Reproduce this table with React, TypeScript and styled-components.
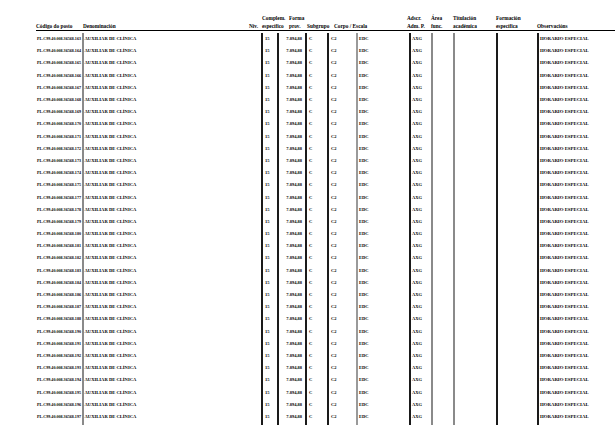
import React from 'react';
import styled, { createGlobalStyle } from 'styled-components';

const GlobalStyle = createGlobalStyle`
  html, body {
    margin: 0;
    padding: 0;
    background: #ffffff;
  }
  body {
    font-family: "Liberation Serif", "Times New Roman", serif;
    color: #000000;
  }
`;

const Page = styled.div`
  width: 615px;
  height: 439px;
  padding: 14px 0 0 36px;
  box-sizing: border-box;
  overflow: hidden;
`;

const headCols = '47px 166px 13px 27px 18px 27px 73px 24px 22px 43px 41px 63px';
const bodyCols = '46px 179px 16px 28px 22px 29px 53px 22px 22px 43px 41px 63px';

const HeaderRow = styled.div`
  display: grid;
  grid-template-columns: ${headCols};
  align-items: end;
  border-bottom: 1px solid #000000;
`;

const HeadCell = styled.div`
  font-size: 5.3px;
  font-weight: bold;
  line-height: 8px;
  height: 16px;
  display: flex;
  flex-direction: column;
  justify-content: flex-end;
  white-space: nowrap;
`;

const Body = styled.div`
  margin-top: 1.5px;
  display: grid;
  grid-template-columns: ${bodyCols};
`;

type Rule = 'none' | 'dark' | 'gray' | 'grayWide';

const ruleShadow: Record<Rule, string> = {
  none: 'none',
  dark: 'inset 2px 0 0 #1a1a1a',
  gray: 'inset 2px 0 0 #8a8a8a',
  grayWide: 'inset 2px 0 0 #9a9a9a',
};

// one column of the listing, with its rule on the left edge
const Column = styled.div<{ $rule: Rule }>`
  display: flex;
  flex-direction: column;
  box-shadow: ${p => ruleShadow[p.$rule]};
  padding-bottom: 2.5px;
`;

const Cell = styled.div<{ $right?: boolean; $pad: number; $size: number }>`
  height: 12.2px;
  display: flex;
  align-items: center;
  justify-content: ${p => (p.$right ? 'flex-end' : 'flex-start')};
  font-size: ${p => p.$size}px;
  font-weight: bold;
  white-space: nowrap;
  overflow: hidden;
  padding: ${p => (p.$right ? `0 ${p.$pad}px 0 0` : `0 0 0 ${p.$pad}px`)};
`;

const columns: { rule: Rule; pad: number; size: number; right?: boolean }[] = [
  { rule: 'none', pad: 1, size: 4.1 },
  { rule: 'gray', pad: 2.5, size: 4.6 },
  { rule: 'dark', pad: 4, size: 4.5 },
  { rule: 'dark', pad: 3, size: 4.5, right: true },
  { rule: 'dark', pad: 4, size: 4.5 },
  { rule: 'dark', pad: 4, size: 4.5 },
  { rule: 'grayWide', pad: 3, size: 4.5 },
  { rule: 'dark', pad: 3, size: 4.5 },
  { rule: 'gray', pad: 3, size: 4.5 },
  { rule: 'gray', pad: 3, size: 4.5 },
  { rule: 'dark', pad: 3, size: 4.5 },
  { rule: 'dark', pad: 3, size: 4.8 },
];

const headers: [string, string][] = [
  ['', 'Código do posto'],
  ['', 'Denominación'],
  ['', 'Niv.'],
  ['Complem.', 'específico'],
  ['Forma', 'prov.'],
  ['', 'Subgrupo'],
  ['', 'Corpo / Escala'],
  ['Adscr.', 'Adm. P.'],
  ['Área', 'func.'],
  ['Titulación', 'académica'],
  ['Formación', 'específica'],
  ['', 'Observacións'],
];

const posts = [
  163, 164, 165, 166, 167, 168, 169, 170, 171, 172, 173, 174, 175, 177, 178, 179,
  180, 181, 182, 183, 184, 186, 187, 188, 190, 191, 192, 193, 194, 195, 196, 197,
];

const columnValue = (col: number, n: number) =>
  [
    `PL.C99.40.008.36568.${n}`,
    'AUXILIAR DE CLÍNICA',
    '15',
    '7.894,88',
    'C',
    'C2',
    'EDC',
    'AXG',
    '',
    '',
    '',
    'HORARIO ESPECIAL',
  ][col];

export default function App() {
  return (
    <>
      <GlobalStyle />
      <Page>
        <HeaderRow>
          {headers.map(([a, b], i) => (
            <HeadCell key={i}>
              {a && <span>{a}</span>}
              <span>{b}</span>
            </HeadCell>
          ))}
        </HeaderRow>
        <Body>
          {columns.map((c, i) => (
            <Column key={i} $rule={c.rule}>
              {posts.map(n => (
                <Cell key={n} $pad={c.pad} $size={c.size} $right={c.right}>
                  {columnValue(i, n)}
                </Cell>
              ))}
            </Column>
          ))}
        </Body>
      </Page>
    </>
  );
}
